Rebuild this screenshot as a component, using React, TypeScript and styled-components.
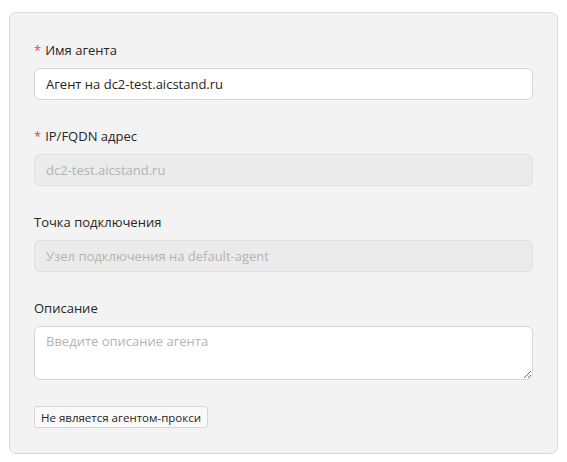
import React from "react";
import styled, { createGlobalStyle } from "styled-components";

const Global = createGlobalStyle`
  body {
    margin: 0;
    background: #ffffff;
    font-family: "Open Sans", "Noto Sans", sans-serif;
  }
`;

const Page = styled.div`
  padding: 12px 9px 10px 9px;
`;

const Panel = styled.form`
  background: #f3f3f3;
  border: 1px solid #dadada;
  border-radius: 7px;
  padding: 27px 24px 25px 24px;
  display: flex;
  flex-direction: column;
`;

const Field = styled.div`
  display: flex;
  flex-direction: column;
  gap: 8px;
  margin-bottom: 26px;
`;

const Label = styled.label`
  font-size: 13px;
  line-height: 20px;
  color: #262626;
`;

const Star = styled.span`
  color: #e2473f;
  margin-right: 4px;
`;

const Input = styled.input`
  box-sizing: border-box;
  height: 32px;
  width: 100%;
  border: 1px solid #d6d6d6;
  border-radius: 6px;
  background: #ffffff;
  padding: 0 11px;
  font-family: inherit;
  font-size: 13px;
  color: #262626;
  outline: none;
  &:disabled {
    background: #ebebeb;
    color: #b3b3b3;
    border-color: #e0e0e0;
  }
  &::placeholder {
    color: #b3b3b3;
  }
`;

const Area = styled.textarea`
  box-sizing: border-box;
  height: 54px;
  width: 100%;
  border: 1px solid #d6d6d6;
  border-radius: 6px;
  background: #ffffff;
  padding: 5px 11px;
  font-family: inherit;
  font-size: 13px;
  color: #262626;
  outline: none;
  resize: vertical;
  &::placeholder {
    color: #b3b3b3;
  }
`;

const Toggle = styled.button`
  align-self: flex-start;
  height: 22px;
  padding: 0 6px;
  border: 1px solid #d6d6d6;
  border-radius: 3px;
  background: #f9f9f9;
  font-family: inherit;
  font-size: 11.5px;
  color: #262626;
  cursor: pointer;
`;

export default function App() {
  return (
    <Page>
      <Global />
      <Panel onSubmit={(e) => e.preventDefault()}>
        <Field>
          <Label>
            <Star>*</Star>Имя агента
          </Label>
          <Input defaultValue="Агент на dc2-test.aicstand.ru" />
        </Field>
        <Field>
          <Label>
            <Star>*</Star>IP/FQDN адрес
          </Label>
          <Input disabled defaultValue="dc2-test.aicstand.ru" />
        </Field>
        <Field>
          <Label>Точка подключения</Label>
          <Input disabled placeholder="Узел подключения на default-agent" />
        </Field>
        <Field>
          <Label>Описание</Label>
          <Area placeholder="Введите описание агента" />
        </Field>
        <Toggle type="button">Не является агентом-прокси</Toggle>
      </Panel>
    </Page>
  );
}
